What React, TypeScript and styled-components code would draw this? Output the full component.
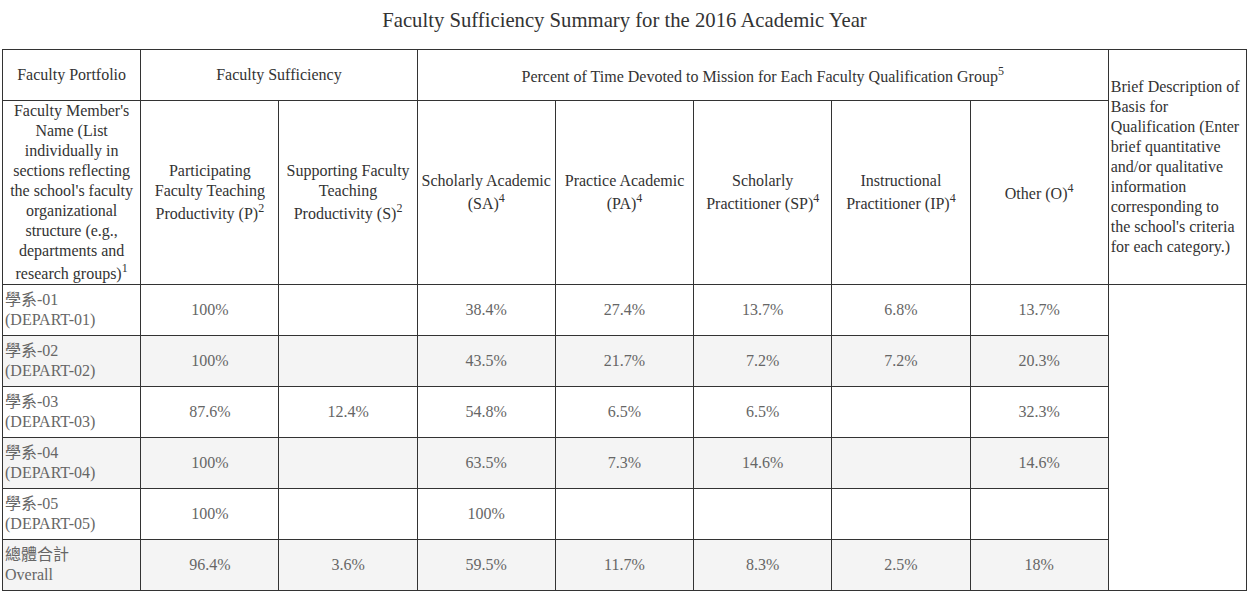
import React from "react";
import styled, { createGlobalStyle } from "styled-components";

const Global = createGlobalStyle`
  html, body { margin: 0; padding: 0; background: #fff; }
  body { font-family: "Liberation Serif", "Noto Sans CJK TC", serif; color: #333; }
`;

const Page = styled.div`
  padding: 0 2px;
`;

const Title = styled.h1`
  margin: 7px 0 16px;
  font-size: 20.7px;
  line-height: 26px;
  font-weight: normal;
  text-align: center;
  color: #333;
`;

const Table = styled.table`
  width: 1245px;
  table-layout: fixed;
  border-collapse: collapse;
  font-size: 16px;
  line-height: 20px;
`;

const HeadCell = styled.th<{ $align?: "left" | "center" }>`
  border: 1px solid #333;
  font-weight: normal;
  color: #333;
  padding: ${(p) => (p.$align === "left" ? "0 5px 0 2px" : "0 2px")};
  text-align: ${(p) => p.$align ?? "center"};
  vertical-align: middle;
  sup { font-size: 12px; line-height: 14px; vertical-align: 7px; }
`;

const Row = styled.tr<{ $striped?: boolean }>`
  background: ${(p) => (p.$striped ? "#f4f4f4" : "#fff")};
`;

const Cell = styled.td<{ $align?: "left" | "center" }>`
  border: 1px solid #333;
  color: #666;
  padding: 5px 2px;
  height: 40px;
  text-align: ${(p) => p.$align ?? "center"};
  vertical-align: middle;
`;

const NoteCell = styled.td`
  border: 1px solid #333;
  background: #fff;
`;

const Line = styled.div``;

type RowData = { zh: string; en: string; values: string[] };

const rows: RowData[] = [
  { zh: "學系-01", en: "(DEPART-01)", values: ["100%", "", "38.4%", "27.4%", "13.7%", "6.8%", "13.7%"] },
  { zh: "學系-02", en: "(DEPART-02)", values: ["100%", "", "43.5%", "21.7%", "7.2%", "7.2%", "20.3%"] },
  { zh: "學系-03", en: "(DEPART-03)", values: ["87.6%", "12.4%", "54.8%", "6.5%", "6.5%", "", "32.3%"] },
  { zh: "學系-04", en: "(DEPART-04)", values: ["100%", "", "63.5%", "7.3%", "14.6%", "", "14.6%"] },
  { zh: "學系-05", en: "(DEPART-05)", values: ["100%", "", "100%", "", "", "", ""] },
  { zh: "總體合計", en: "Overall", values: ["96.4%", "3.6%", "59.5%", "11.7%", "8.3%", "2.5%", "18%"] },
];

export default function App() {
  return (
    <Page>
      <Global />
      <Title>Faculty Sufficiency Summary for the 2016 Academic Year</Title>
      <Table>
        <thead>
          <tr>
            <HeadCell style={{ height: 50 }}>Faculty Portfolio</HeadCell>
            <HeadCell colSpan={2}>Faculty Sufficiency</HeadCell>
            <HeadCell colSpan={5}>
              Percent of Time Devoted to Mission for Each Faculty Qualification Group<sup>5</sup>
            </HeadCell>
            <HeadCell rowSpan={2} $align="left">
              Brief Description of Basis for Qualification (Enter brief quantitative and/or qualitative
              information corresponding to the school's criteria for each category.)
            </HeadCell>
          </tr>
          <tr>
            <HeadCell>
              Faculty Member's Name (List individually in sections reflecting the school's faculty
              organizational structure (e.g., departments and research groups)<sup>1</sup>
            </HeadCell>
            <HeadCell>
              Participating Faculty Teaching Productivity (P)<sup>2</sup>
            </HeadCell>
            <HeadCell>
              Supporting Faculty Teaching Productivity (S)<sup>2</sup>
            </HeadCell>
            <HeadCell>
              Scholarly Academic (SA)<sup>4</sup>
            </HeadCell>
            <HeadCell>
              Practice Academic (PA)<sup>4</sup>
            </HeadCell>
            <HeadCell>
              Scholarly Practitioner (SP)<sup>4</sup>
            </HeadCell>
            <HeadCell>
              Instructional Practitioner (IP)<sup>4</sup>
            </HeadCell>
            <HeadCell>
              Other (O)<sup>4</sup>
            </HeadCell>
          </tr>
        </thead>
        <tbody>
          {rows.map((r, i) => (
            <Row key={r.en} $striped={i % 2 === 1}>
              <Cell $align="left">
                <Line>{r.zh}</Line>
                <Line>{r.en}</Line>
              </Cell>
              {r.values.map((v, j) => (
                <Cell key={j}>{v}</Cell>
              ))}
              {i === 0 && <NoteCell rowSpan={6} />}
            </Row>
          ))}
        </tbody>
      </Table>
    </Page>
  );
}
